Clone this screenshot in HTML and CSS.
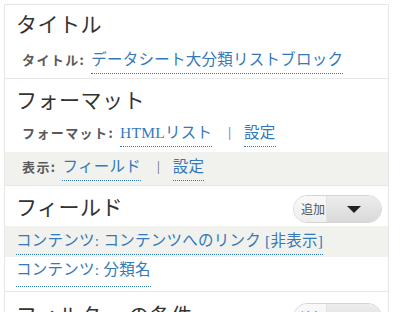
FILE: index.html
```html
<!DOCTYPE html>
<html lang="ja">
<head>
<meta charset="utf-8">
<link rel="stylesheet" href="styles.css">
</head>
<body>
<div class="panel">
  <section class="sec">
    <div class="head h1"><h2 class="title">タイトル</h2></div>
    <div class="row r1"><span class="label l1">タイトル:</span><a class="link">データシート大分類リストブロック</a></div>
  </section>
  <section class="sec">
    <div class="head h2"><h2 class="title">フォーマット</h2></div>
    <div class="row r2"><span class="label">フォーマット:</span><a class="link">HTMLリスト</a><span class="sep">|</span><a class="link">設定</a></div>
    <div class="row band r3"><span class="label">表示:</span><a class="link">フィールド</a><span class="sep">|</span><a class="link">設定</a></div>
  </section>
  <section class="sec">
    <div class="head h3"><h2 class="title">フィールド</h2>
      <div class="btn"><span class="btn-main">追加</span><span class="btn-drop"><span class="tri"></span></span></div>
    </div>
    <div class="row band field r4"><a class="link">コンテンツ: コンテンツへのリンク [非表示]</a></div>
    <div class="row field r5"><a class="link">コンテンツ: 分類名</a></div>
  </section>
  <section class="sec">
    <div class="head h4"><h2 class="title">フィルター の条件</h2>
      <div class="btn"><span class="btn-main">追加</span><span class="btn-drop"><span class="tri"></span></span></div>
    </div>
  </section>
</div>
</body>
</html>
```

FILE: styles.css
```css
html, body {
  margin: 0;
  padding: 0;
  background: #ffffff;
  overflow: hidden;
}
body {
  font-family: "Liberation Serif", "Noto Sans CJK JP", serif;
  color: #333;
}
.panel {
  margin: 4px 0 0 4px;
  width: 383px;
  border: 1px solid #e6e6e6;
  border-bottom: none;
}
.sec {
  border-bottom: 1px solid #e8e8e8;
}
.head {
  display: flex;
  align-items: center;
  justify-content: space-between;
  padding: 0 6px 0 11px;
}
.title {
  margin: 0;
  font-family: "Noto Sans CJK JP", sans-serif;
  font-weight: 400;
  font-size: 21px;
  line-height: 36px;
  color: #333;
  letter-spacing: 0.5px;
  white-space: nowrap;
}
.h1 { height: 36px; }
.h2 { height: 36px; padding-top: 2px; }
.h3 { height: 40px; }
.h4 { height: 40px; padding-top: 2px; }
.row {
  display: flex;
  align-items: flex-end;
  padding-left: 17px;
}
.r1 { padding-top: 10px; padding-bottom: 4px; }
.r2 { padding-top: 7px; padding-bottom: 5px; }
.r3 { padding-top: 6px; padding-bottom: 4px; }
.r4 { padding-top: 6px; padding-bottom: 2px; }
.r5 { padding-top: 4px; padding-bottom: 4px; }
.r5 .link { padding-bottom: 7px; }
.field { padding-left: 11px; }
.band {
  background: #f1f2ed;
}
.label {
  font-family: "Noto Sans CJK JP", sans-serif;
  font-weight: 700;
  font-size: 13px;
  line-height: 18px;
  letter-spacing: 1.4px;
  color: #5a5a5a;
  margin-right: 6px;
  padding-bottom: 5px;
}
.l1 { margin-right: 6px; }
.link {
  display: inline-block;
  font-size: 15.5px;
  line-height: 18px;
  letter-spacing: 0.25px;
  color: #3479b9;
  border-bottom: 1px dotted #3479b9;
  padding-bottom: 4px;
  cursor: pointer;
}
.sep {
  color: #666;
  font-size: 14px;
  line-height: 18px;
  margin: 0 13px 0 16px;
  padding-bottom: 5px;
}
.btn {
  display: flex;
  height: 28px;
  width: 89px;
  border: 1px solid #d4d4d4;
  border-radius: 15px;
  overflow: hidden;
  box-sizing: border-box;
  margin-top: 6px;
  flex-shrink: 0;
}
.btn-main {
  width: 33px;
  box-sizing: border-box;
  padding-left: 7px;
  font-family: "Noto Sans CJK JP", sans-serif;
  font-size: 12px;
  line-height: 26px;
  color: #555;
  background: linear-gradient(#f9f9f9, #eeeeee);
  border-right: 1px solid #e2e2e2;
}
.btn-drop {
  flex: 1;
  display: flex;
  align-items: center;
  justify-content: center;
  background: linear-gradient(#ededed, #d9d9d9);
}
.tri {
  width: 0;
  height: 0;
  border-left: 7px solid transparent;
  border-right: 7px solid transparent;
  border-top: 7px solid #222;
}
```
